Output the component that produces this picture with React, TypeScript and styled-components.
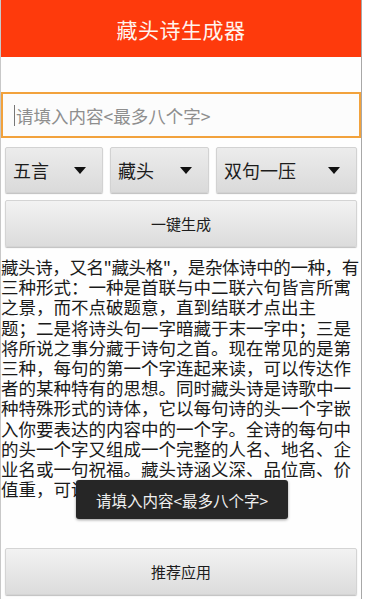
import React from 'react'
import styled, { createGlobalStyle } from 'styled-components'

const GlobalStyle = createGlobalStyle`
  html, body {
    margin: 0;
    padding: 0;
    background: #ffffff;
  }
  body {
    font-family: "Noto Sans CJK SC", "Noto Sans", sans-serif;
  }
`

const Frame = styled.div`
  position: relative;
  width: 362px;
  height: 599px;
  box-sizing: border-box;
  display: flex;
  flex-direction: column;
  border-left: 1px solid #c8c8c8;
  border-right: 1px solid #a8a8a8;
  background: #fefefe;
  padding-bottom: 4px;
  overflow: hidden;
`

const Header = styled.div`
  height: 57px;
  background: #fe3a0c;
  color: #fff4ee;
  display: flex;
  align-items: center;
  justify-content: center;
  font-size: 21px;
  letter-spacing: 0.5px;
`

const Field = styled.div`
  margin-top: 35px;
  height: 46px;
  box-sizing: border-box;
  border: 2px solid #f2a23c;
  background: #fcfcfc;
  display: flex;
  align-items: center;
  padding-left: 11px;
`

const Caret = styled.span`
  width: 1px;
  height: 21px;
  background: #777;
  margin-right: 1px;
`

const Placeholder = styled.span`
  font-size: 17.5px;
  color: #8e8e8e;
`

const SelectRow = styled.div`
  display: flex;
  gap: 7px;
  margin: 9px 4px 0 4px;
`

const Select = styled.div<{ $w?: number }>`
  ${({ $w }) => ($w ? `width: ${$w}px;` : 'flex: 1;')}
  height: 46px;
  box-sizing: border-box;
  display: flex;
  align-items: center;
  justify-content: space-between;
  padding: 0 16px 0 7px;
  border: 1px solid #d2d2d2;
  border-radius: 2px;
  background: linear-gradient(#ececec, #dadada);
  box-shadow: 0 1px 1px rgba(0, 0, 0, 0.25);
  font-size: 18px;
  color: #1c1c1c;
`

const Arrow = styled.span`
  width: 0;
  height: 0;
  border-left: 6px solid transparent;
  border-right: 6px solid transparent;
  border-top: 7px solid #111;
`

const GrayButton = styled.div<{ $top?: number }>`
  margin: ${({ $top }) => ($top !== undefined ? `${$top}px` : 'auto')} 4px 0 4px;
  height: 47px;
  box-sizing: border-box;
  display: flex;
  align-items: center;
  justify-content: center;
  border: 1px solid #d4d4d4;
  border-radius: 2px;
  background: linear-gradient(#f2f2f2, #dcdcdc);
  box-shadow: 0 1px 1px rgba(0, 0, 0, 0.25);
  font-size: 15px;
  color: #1c1c1c;
`

const Article = styled.div`
  margin-top: 10px;
  font-size: 17.5px;
  line-height: 20.2px;
  color: #1a1a1a;
`

const Line = styled.div<{ $tight?: boolean }>`
  white-space: nowrap;
  letter-spacing: ${({ $tight }) => ($tight ? '-0.4px' : '0')};
`

const Toast = styled.div`
  position: absolute;
  left: 75px;
  top: 480px;
  width: 212px;
  height: 39px;
  display: flex;
  align-items: center;
  justify-content: center;
  background: #262626;
  border-radius: 3px;
  box-shadow: 0 1px 3px rgba(0, 0, 0, 0.4);
  color: #f0f0f0;
  font-size: 15.5px;
`

const lines = [
  '藏头诗，又名"藏头格"，是杂体诗中的一种，有',
  '三种形式：一种是首联与中二联六句皆言所寓',
  '之景，而不点破题意，直到结联才点出主',
  '题；二是将诗头句一字暗藏于末一字中；三是',
  '将所说之事分藏于诗句之首。现在常见的是第',
  '三种，每句的第一个字连起来读，可以传达作',
  '者的某种特有的思想。同时藏头诗是诗歌中一',
  '种特殊形式的诗体，它以每句诗的头一个字嵌',
  '入你要表达的内容中的一个字。全诗的每句中',
  '的头一个字又组成一个完整的人名、地名、企',
  '业名或一句祝福。藏头诗涵义深、品位高、价',
  '值重，可读性强。',
]

export default function App() {
  return (
    <>
      <GlobalStyle />
      <Frame>
        <Header>藏头诗生成器</Header>
        <Field>
          <Caret />
          <Placeholder>请填入内容&lt;最多八个字&gt;</Placeholder>
        </Field>
        <SelectRow>
          <Select $w={98}>五言<Arrow /></Select>
          <Select $w={99}>藏头<Arrow /></Select>
          <Select>双句一压<Arrow /></Select>
        </SelectRow>
        <GrayButton $top={7}>一键生成</GrayButton>
        <Article>
          {lines.map((l, i) => (
            <Line key={i} $tight={i === 0}>{l}</Line>
          ))}
        </Article>
        <GrayButton>推荐应用</GrayButton>
        <Toast>请填入内容&lt;最多八个字&gt;</Toast>
      </Frame>
    </>
  )
}
